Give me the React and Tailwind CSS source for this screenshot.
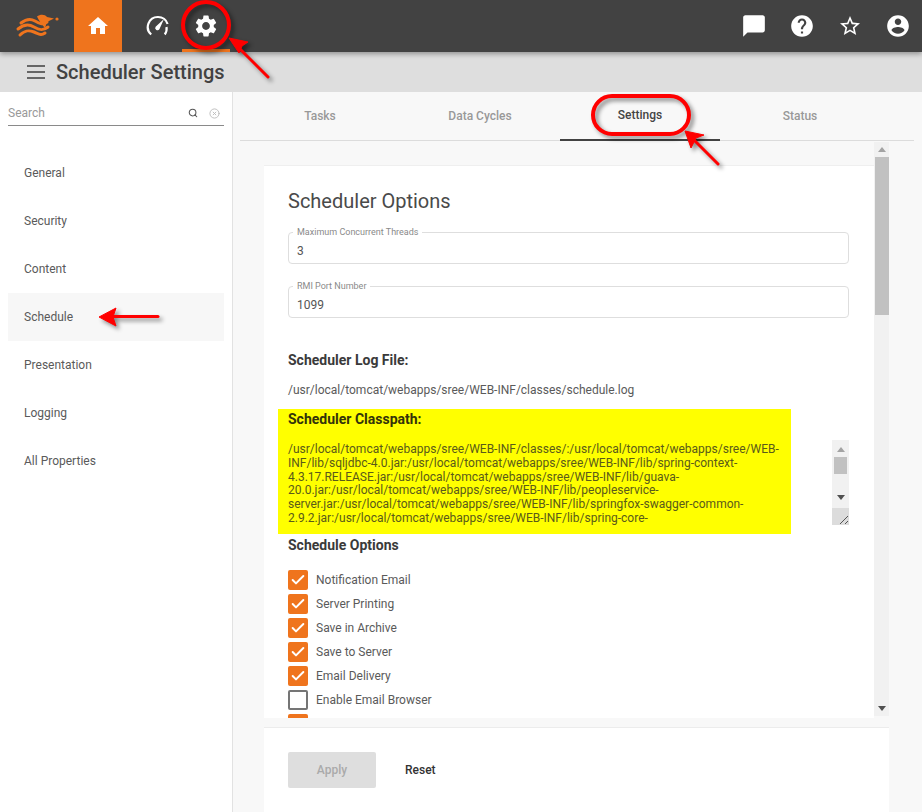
import { Search, XCircle, Check } from "lucide-react";

const navItems = ["General", "Security", "Content", "Schedule", "Presentation", "Logging", "All Properties"];
const tabs = ["Tasks", "Data Cycles", "Settings", "Status"];
const options = [
  { label: "Notification Email", checked: true },
  { label: "Server Printing", checked: true },
  { label: "Save in Archive", checked: true },
  { label: "Save to Server", checked: true },
  { label: "Email Delivery", checked: true },
  { label: "Enable Email Browser", checked: false },
];
const classpath = [
  "/usr/local/tomcat/webapps/sree/WEB-INF/classes/:/usr/local/tomcat/webapps/sree/WEB-",
  "INF/lib/sqljdbc-4.0.jar:/usr/local/tomcat/webapps/sree/WEB-INF/lib/spring-context-",
  "4.3.17.RELEASE.jar:/usr/local/tomcat/webapps/sree/WEB-INF/lib/guava-",
  "20.0.jar:/usr/local/tomcat/webapps/sree/WEB-INF/lib/peopleservice-",
  "server.jar:/usr/local/tomcat/webapps/sree/WEB-INF/lib/springfox-swagger-common-",
  "2.9.2.jar:/usr/local/tomcat/webapps/sree/WEB-INF/lib/spring-core-",
];

const Icon = ({ size = 24, d }) => (
  <svg width={size} height={size} viewBox="0 0 24 24" fill="white">
    <path d={d} />
  </svg>
);

const Logo = () => (
  <svg width="56" height="36" viewBox="0 0 56 36" fill="none" stroke="#ef741d" strokeLinecap="round">
    <path d="M11 15C16 11 20 10 25 13S33 17 37 14" strokeWidth="3" />
    <path d="M8 21C14 16 19 16 24 19S33 23 38 19" strokeWidth="3" />
    <path d="M10 27C15 22 19 22 24 24S31 28 35 25" strokeWidth="3" />
    <path d="M27 8.5C30 6 35 6 37 9L44 10.5 37 14 35 20C32 17 29 13 27 8.5z" fill="#ef741d" stroke="none" />
    <circle cx="47" cy="11" r="1.6" fill="#ef741d" stroke="none" />
  </svg>
);

const Gauge = () => (
  <svg width="24" height="24" viewBox="0 0 24 24" fill="none" stroke="white">
    <path d="M5.2 20.5A10 10 0 0 1 12 3a10 10 0 0 1 9.6 7" strokeWidth="2.2" />
    <path d="M20.5 13a10 10 0 0 1-1.7 7.5" strokeWidth="2.2" />
    <path d="M9.6 12.8L18 5l-4.6 10.2a2.1 2.1 0 0 1-3.8-2.4z" fill="white" stroke="none" />
  </svg>
);

const Annotations = () => (
  <svg
    className="absolute inset-0 z-20 pointer-events-none drop-shadow-[3px_3px_2px_rgba(0,0,0,0.45)]"
    width="922"
    height="812"
    fill="none"
    stroke="#ff0000"
  >
    <circle cx="206" cy="25" r="23" strokeWidth="4" />
    <path d="M268 77L236 45" strokeWidth="3" strokeLinecap="round" />
    <path d="M229 38l19 4-6 4-3 7z" fill="#ff0000" strokeWidth="1" />
    <rect x="593" y="96" width="96" height="38" rx="19" strokeWidth="4" />
    <path d="M718 164L692 138" strokeWidth="3" strokeLinecap="round" />
    <path d="M685 131l19 4-8 3-5 10z" fill="#ff0000" strokeWidth="1" />
    <path d="M158 316.5H112" strokeWidth="3" strokeLinecap="round" />
    <path d="M99 317l17-9-3 9 3 9z" fill="#ff0000" strokeWidth="1" />
  </svg>
);

const Field = ({ label, value, className }) => (
  <div className={`relative h-8 rounded border border-[#dedede] pl-2 flex items-center pt-[5px] text-[12px] text-[#555] ${className}`}>
    <span className="absolute -top-[7px] left-[4px] bg-white px-1 text-[9px] leading-[12px] text-[#8a8a8a]">{label}</span>
    {value}
  </div>
);

const TextScroll = () => (
  <div className="ml-[41px] mt-[31px] flex h-[85px] w-[17px] flex-col">
    <div className="flex h-[68px] flex-col items-center bg-[#f1f1f1]">
      <div className="mt-[7px] h-0 w-0 border-x-[4px] border-b-[5px] border-x-transparent border-b-[#a3a3a3]" />
      <div className="mt-[5px] h-[17px] w-[13px] bg-[#c1c1c1]" />
      <div className="mt-[21px] h-0 w-0 border-x-[4px] border-t-[5px] border-x-transparent border-t-[#505050]" />
    </div>
    <div className="h-[17px] bg-[#dcdcdc] flex justify-end items-end">
      <svg width="10" height="10" viewBox="0 0 10 10" stroke="#555" strokeWidth="1">
        <path d="M1 9l8-8M6 9l3-3" />
      </svg>
    </div>
  </div>
);

export default function App() {
  return (
    <div className="relative flex h-[812px] w-[922px] flex-col overflow-hidden bg-white font-['Roboto',sans-serif]">
      {/* TOP BAR */}
      <header className="z-10 flex h-[52px] shrink-0 items-stretch bg-[#424242] shadow-[0_2px_5px_rgba(0,0,0,0.35)]">
        <div className="flex w-[74px] items-center pl-[10px]">
          <Logo />
        </div>
        <div className="flex w-12 items-center justify-center bg-[#ef741d]">
          <Icon d="M10 20v-6h4v6h5v-8h3L12 3 2 12h3v8z" />
        </div>
        <div className="ml-3 flex w-12 items-center justify-center">
          <Gauge />
        </div>
        <div className="flex w-12 items-center justify-center border-b-[3px] border-[#ef741d] pt-[3px]">
          <Icon size={26} d="M19.14 12.94c.04-.3.06-.61.06-.94 0-.32-.02-.64-.07-.94l2.03-1.58a.49.49 0 0 0 .12-.61l-1.92-3.32a.488.488 0 0 0-.59-.22l-2.39.96c-.5-.38-1.03-.7-1.62-.94l-.36-2.54a.484.484 0 0 0-.48-.41h-3.84c-.24 0-.43.17-.47.41l-.36 2.54c-.59.24-1.13.57-1.62.94l-2.39-.96c-.22-.08-.47 0-.59.22L2.74 8.87c-.12.21-.08.47.12.61l2.03 1.58c-.05.3-.09.63-.09.94s.02.64.07.94l-2.03 1.58a.49.49 0 0 0-.12.61l1.92 3.32c.12.22.37.29.59.22l2.39-.96c.5.38 1.03.7 1.62.94l.36 2.54c.05.24.24.41.48.41h3.84c.24 0 .44-.17.47-.41l.36-2.54c.59-.24 1.13-.56 1.62-.94l2.39.96c.22.08.47 0 .59-.22l1.92-3.32c.12-.22.07-.47-.12-.61l-2.01-1.58zM12 15.6c-1.98 0-3.6-1.62-3.6-3.6s1.62-3.6 3.6-3.6 3.6 1.62 3.6 3.6-1.62 3.6-3.6 3.6z" />
        </div>
        <div className="ml-auto flex items-center">
          <div className="flex w-12 justify-center">
            <Icon size={26} d="M20 2H4c-1.1 0-2 .9-2 2v18l4-4h14c1.1 0 2-.9 2-2V4c0-1.1-.9-2-2-2z" />
          </div>
          <div className="flex w-12 justify-center">
            <Icon size={26} d="M12 2C6.48 2 2 6.48 2 12s4.48 10 10 10 10-4.48 10-10S17.52 2 12 2zm1 17h-2v-2h2v2zm2.07-7.75l-.9.92C13.45 12.9 13 13.5 13 15h-2v-.5c0-1.1.45-2.1 1.17-2.83l1.24-1.26c.37-.36.59-.86.59-1.41 0-1.1-.9-2-2-2s-2 .9-2 2H8c0-2.21 1.79-4 4-4s4 1.79 4 4c0 .88-.36 1.68-.93 2.25z" />
          </div>
          <div className="flex w-12 justify-center">
            <Icon d="M22 9.24l-7.19-.62L12 2 9.19 8.63 2 9.24l5.46 4.73L5.82 21 12 17.27 18.18 21l-1.63-7.03L22 9.24zM12 15.4l-3.76 2.27 1-4.28-3.32-2.88 4.38-.38L12 6.1l1.71 4.04 4.38.38-3.32 2.88 1 4.28L12 15.4z" />
          </div>
          <div className="flex w-12 justify-center">
            <Icon size={26} d="M12 2C6.48 2 2 6.48 2 12s4.48 10 10 10 10-4.48 10-10S17.52 2 12 2zm0 3c1.66 0 3 1.34 3 3s-1.34 3-3 3-3-1.34-3-3 1.34-3 3-3zm0 14.2c-2.5 0-4.71-1.28-6-3.22.03-1.99 4-3.08 6-3.08 1.99 0 5.97 1.09 6 3.08-1.29 1.94-3.5 3.22-6 3.22z" />
          </div>
        </div>
      </header>

      {/* TITLE BAR */}
      <div className="flex h-10 shrink-0 items-center bg-[#dedede] pl-[27px]">
        <div className="flex w-[18px] flex-col gap-[4px]">
          <div className="h-[2px] bg-[#666]" />
          <div className="h-[2px] bg-[#666]" />
          <div className="h-[2px] bg-[#666]" />
        </div>
        <h1 className="ml-[11px] text-[20px] font-medium text-[#424242]">Scheduler Settings</h1>
      </div>

      <div className="flex min-h-0 flex-1">
        {/* SIDEBAR */}
        <aside className="w-[233px] shrink-0 border-r border-[#e2e2e2] bg-white">
          <div className="mx-2 mt-3 flex h-[22px] items-center border-b border-[#8a8a8a] pb-[3px] text-[12px] text-[#999]">
            <span className="flex-1">Search</span>
            <Search size={10} strokeWidth={2.5} className="mr-[3px] text-[#555]" />
            <XCircle size={11} className="ml-[8px] mr-1 text-[#bbb]" />
          </div>
          <nav className="mt-[23px]">
            {navItems.map((item) => (
              <div
                key={item}
                className={`mx-2 flex h-12 items-center pl-4 text-[12px] text-[#5a5a5a] ${item === "Schedule" ? "bg-[#f7f7f7]" : ""}`}
              >
                {item}
              </div>
            ))}
          </nav>
        </aside>

        {/* MAIN */}
        <main className="flex min-w-0 flex-1 flex-col bg-[#f8f8f8]">
          <div className="ml-[7px] mr-2 flex h-[49px] shrink-0 border-b border-[#dcdcdc]">
            {tabs.map((tab) => (
              <div
                key={tab}
                className={`flex h-[49px] w-40 items-center justify-center pb-[2px] text-[12px] font-medium ${tab === "Settings" ? "border-b-2 border-[#424242] text-[#444]" : "text-[#999]"}`}
              >
                {tab}
              </div>
            ))}
          </div>

          <div className="flex h-[577px] shrink-0 pl-[31px]">
            <div className="w-[610px] pt-6">
              <section className="h-[553px] overflow-hidden border-t border-[#efefef] bg-white pl-6">
                <h2 className="mt-[23px] h-6 text-[20px] leading-6 text-[#4a4a4a]">Scheduler Options</h2>
                <Field label="Maximum Concurrent Threads" value="3" className="mt-[19px] w-[561px]" />
                <Field label="RMI Port Number" value="1099" className="mt-[22px] w-[561px]" />
                <h3 className="mt-8 h-5 text-[14px] font-bold leading-5 text-[#3a3a3a]">Scheduler Log File:</h3>
                <p className="mt-3 h-4 text-[12px] leading-4 text-[#5a5a5a]">/usr/local/tomcat/webapps/sree/WEB-INF/classes/schedule.log</p>
                <div className="-ml-[10px] mt-[11px] flex">
                  <div className="h-[125px] w-[513px] shrink-0 bg-[#ffff00] pl-[10px]">
                    <h3 className="h-5 text-[14px] font-bold leading-5 text-[#33330a]">Scheduler Classpath:</h3>
                    <div className="mt-[14px] text-[12px] leading-[13.8px] text-[#5a5a1a]">
                      {classpath.map((line) => (
                        <div key={line} className="whitespace-nowrap">{line}</div>
                      ))}
                    </div>
                  </div>
                  <TextScroll />
                </div>
                <h3 className="mt-px h-5 text-[14px] font-bold leading-5 text-[#3a3a3a]">Schedule Options</h3>
                <div className="mt-[15px]">
                  {options.map((opt) => (
                    <div key={opt.label} className="flex h-6 items-start">
                      {opt.checked ? (
                        <div className="flex h-5 w-5 items-center justify-center rounded-[2px] bg-[#ef741d]">
                          <Check size={16} strokeWidth={3} className="text-white" />
                        </div>
                      ) : (
                        <div className="h-5 w-5 rounded-[2px] border-2 border-[#757575]" />
                      )}
                      <span className="ml-2 text-[12px] leading-5 text-[#5a5a5a]">{opt.label}</span>
                    </div>
                  ))}
                  <div className="h-5 w-5 rounded-[2px] bg-[#ef741d]" />
                </div>
              </section>
            </div>
            <div className="mb-[2px] mt-px flex w-[15px] flex-col items-center bg-[#f1f1f1]">
              <div className="mt-[5px] h-0 w-0 border-x-[4px] border-b-[5px] border-x-transparent border-b-[#a3a3a3]" />
              <div className="mt-[5px] h-[158px] w-[14px] bg-[#c1c1c1]" />
              <div className="mb-[5px] mt-auto h-0 w-0 border-x-[4px] border-t-[5px] border-x-transparent border-t-[#505050]" />
            </div>
          </div>

          <footer className="ml-[31px] mt-[9px] flex h-[85px] w-[625px] shrink-0 items-start border-t border-[#ececec] bg-white pl-6 pt-6">
            <div className="flex h-9 w-[88px] items-center justify-center rounded-[2px] bg-[#dedede] text-[12px] font-medium text-[#aaa]">
              Apply
            </div>
            <div className="ml-[29px] flex h-9 items-center text-[12px] font-medium text-[#333]">Reset</div>
          </footer>
        </main>
      </div>

      <Annotations />
    </div>
  );
}
